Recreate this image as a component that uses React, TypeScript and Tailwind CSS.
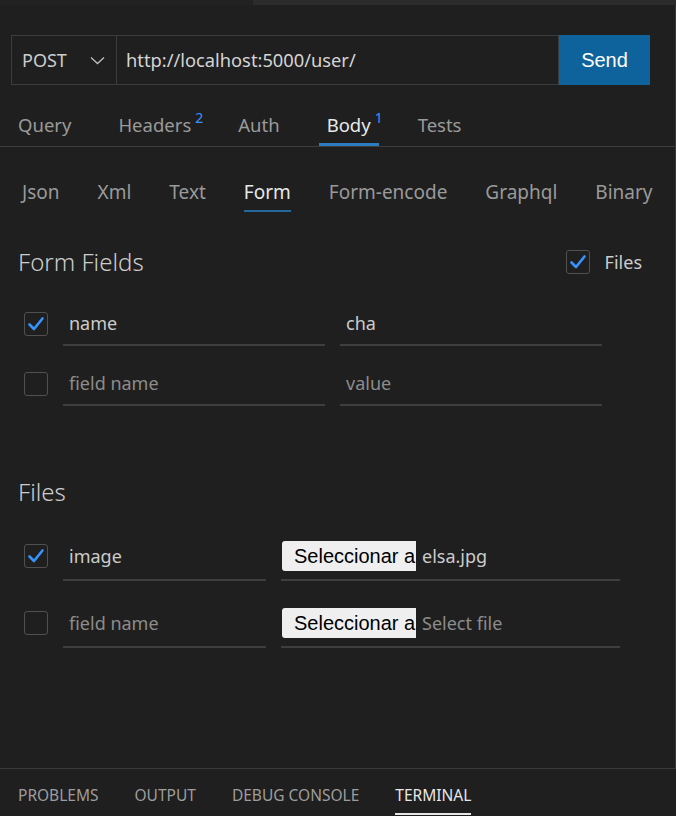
import React from "react";

const FONT = { fontFamily: '"Noto Sans", "Open Sans", sans-serif' };

function Check({ checked }: { checked: boolean }) {
  return (
    <div className="w-[24px] h-[24px] rounded-[3px] border border-[#505050] bg-[#1f1f1f] flex items-center justify-center shrink-0">
      {checked && (
        <svg width="20" height="20" viewBox="0 0 20 20" fill="none">
          <path d="M3.5 10.5 L8 15 L16.5 4.5" stroke="#3794ff" strokeWidth="2.6" strokeLinecap="round" strokeLinejoin="round" />
        </svg>
      )}
    </div>
  );
}

function MainTab({ label, sup, active }: { label: string; sup?: string; active?: boolean }) {
  return (
    <div className="relative flex items-center px-2">
      <span className={active ? "text-[#e8e8e8]" : "text-[#9a9a9a]"}>{label}</span>
      {sup && (
        <span className="absolute left-full top-[8px] -ml-[4px] text-[14px] leading-[14px] text-[#3794ff]">{sup}</span>
      )}
      {active && <span className="absolute left-0 right-0 bottom-0 h-[3px] bg-[#2d7cc0]" />}
    </div>
  );
}

function SubTab({ label, active }: { label: string; active?: boolean }) {
  return (
    <div className="flex flex-col">
      <span className={"leading-[24px] " + (active ? "text-[#e8e8e8]" : "text-[#9a9a9a]")}>{label}</span>
      <span className={"mt-[6px] h-[2px] " + (active ? "bg-[#24679b]" : "bg-transparent")} />
    </div>
  );
}

function FieldRow({ checked, name, value, placeholder, mt }: { checked: boolean; name: string; value: string; placeholder?: boolean; mt: string }) {
  return (
    <div className={"flex items-start ml-[24px] " + mt}>
      <div className="h-[41px] flex items-center">
        <Check checked={checked} />
      </div>
      <div className={"ml-[15px] w-[262px] h-[43px] border-b-2 border-[#3e3e3e] flex items-center pl-[6px] " + (placeholder ? "text-[#8c8c8c]" : "text-[#cccccc]")}>
        {name}
      </div>
      <div className={"ml-[15px] w-[262px] h-[43px] border-b-2 border-[#3e3e3e] flex items-center pl-[6px] " + (placeholder ? "text-[#8c8c8c]" : "text-[#cccccc]")}>
        {value}
      </div>
    </div>
  );
}

function FileRow({ checked, name, file, placeholder, mt }: { checked: boolean; name: string; file: string; placeholder?: boolean; mt: string }) {
  return (
    <div className={"flex items-start ml-[24px] " + mt}>
      <div className="h-[46px] flex items-center">
        <Check checked={checked} />
      </div>
      <div className={"ml-[15px] w-[203px] h-[48px] border-b-2 border-[#3e3e3e] flex items-center pl-[6px] " + (placeholder ? "text-[#8c8c8c]" : "text-[#cccccc]")}>
        {name}
      </div>
      <div className="ml-[15px] w-[339px] h-[48px] border-b-2 border-[#3e3e3e] flex items-center">
        <div
          className="ml-[1px] w-[134px] h-[30px] bg-[#efefef] rounded-l-[3px] overflow-hidden whitespace-nowrap flex items-center pl-[12px] text-black text-[20px]"
          style={{ fontFamily: '"Liberation Sans", Arial, sans-serif' }}
        >
          Seleccionar a
        </div>
        <span className={"ml-[6px] " + (placeholder ? "text-[#8c8c8c]" : "text-[#cccccc]")}>{file}</span>
      </div>
    </div>
  );
}

export default function App() {
  return (
    <div className="w-[676px] h-[816px] bg-[#1f1f1f] flex flex-col overflow-hidden text-[18px]" style={FONT}>
      <div className="flex h-[5px] shrink-0">
        <div className="w-[253px] bg-[#222222]" />
        <div className="flex-1 bg-[#2b2b2b]" />
      </div>
      <div className="flex-1 border-r border-[#3a3a3a] flex flex-col">
        {/* URL bar */}
        <div className="mt-[30px] ml-[11px] flex h-[50px] w-[639px]">
          <div className="w-[106px] border border-[#3c3c3c] flex items-center justify-between pl-[10px] pr-[11px] text-[#cccccc]">
            <span>POST</span>
            <svg width="15" height="9" viewBox="0 0 15 9" fill="none">
              <path d="M1 1.5 L7.5 7.5 L14 1.5" stroke="#bdbdbd" strokeWidth="1.3" />
            </svg>
          </div>
          <div className="flex-1 border-y border-r border-[#3c3c3c] flex items-center pl-[9px] text-[#d4d4d4] text-[18.3px]">
            http://localhost:5000/user/
          </div>
          <div
            className="w-[91px] bg-[#0e639c] flex items-center justify-center text-white text-[20px]"
            style={{ fontFamily: '"Liberation Sans", Arial, sans-serif' }}
          >
            Send
          </div>
        </div>

        {/* Main tabs */}
        <div className="mt-[18px] h-[44px] border-b border-[#3c3c3c] flex items-stretch pl-[10px] gap-[31px] text-[18.5px]">
          <MainTab label="Query" />
          <MainTab label="Headers" sup="2" />
          <MainTab label="Auth" />
          <MainTab label="Body" sup="1" active />
          <MainTab label="Tests" />
        </div>

        {/* Sub tabs */}
        <div className="mt-[33px] flex pl-[22px] gap-[38px] text-[19px]">
          <SubTab label="Json" />
          <SubTab label="Xml" />
          <SubTab label="Text" />
          <SubTab label="Form" active />
          <SubTab label="Form-encode" />
          <SubTab label="Graphql" />
          <SubTab label="Binary" />
        </div>

        {/* Form Fields heading */}
        <div className="mt-[34px] h-[32px] flex items-center justify-between pl-[18px] pr-[33px]">
          <span className="text-[24px] font-light text-[#cccccc] leading-[32px]">Form Fields</span>
          <div className="flex items-center gap-[15px]">
            <Check checked />
            <span className="text-[#cccccc]">Files</span>
          </div>
        </div>

        <FieldRow checked name="name" value="cha" mt="mt-[25px]" />
        <FieldRow checked={false} name="field name" value="value" placeholder mt="mt-[17px]" />

        <div className="mt-[70px] h-[32px] pl-[18px] flex items-center">
          <span className="text-[24px] font-light text-[#cccccc] leading-[32px]">Files</span>
        </div>

        <FileRow checked name="image" file="elsa.jpg" mt="mt-[25px]" />
        <FileRow checked={false} name="field name" file="Select file" placeholder mt="mt-[19px]" />
      </div>

      {/* Bottom panel */}
      <div className="h-[48px] shrink-0 border-t border-[#3a3a3a] flex pl-[16px] gap-[32px] text-[15.5px] uppercase">
        {[
          ["PROBLEMS", false],
          ["OUTPUT", false],
          ["DEBUG CONSOLE", false],
          ["TERMINAL", true],
        ].map(([l, a]) => (
          <div key={l as string} className="flex flex-col px-[2px] pt-[16px]">
            <span className={"leading-[20px] " + (a ? "text-[#e7e7e7]" : "text-[#9d9d9d]")}>{l as string}</span>
            <span className={"mt-[8px] h-[2px] " + (a ? "bg-[#e7e7e7]" : "bg-transparent")} />
          </div>
        ))}
      </div>
    </div>
  );
}
